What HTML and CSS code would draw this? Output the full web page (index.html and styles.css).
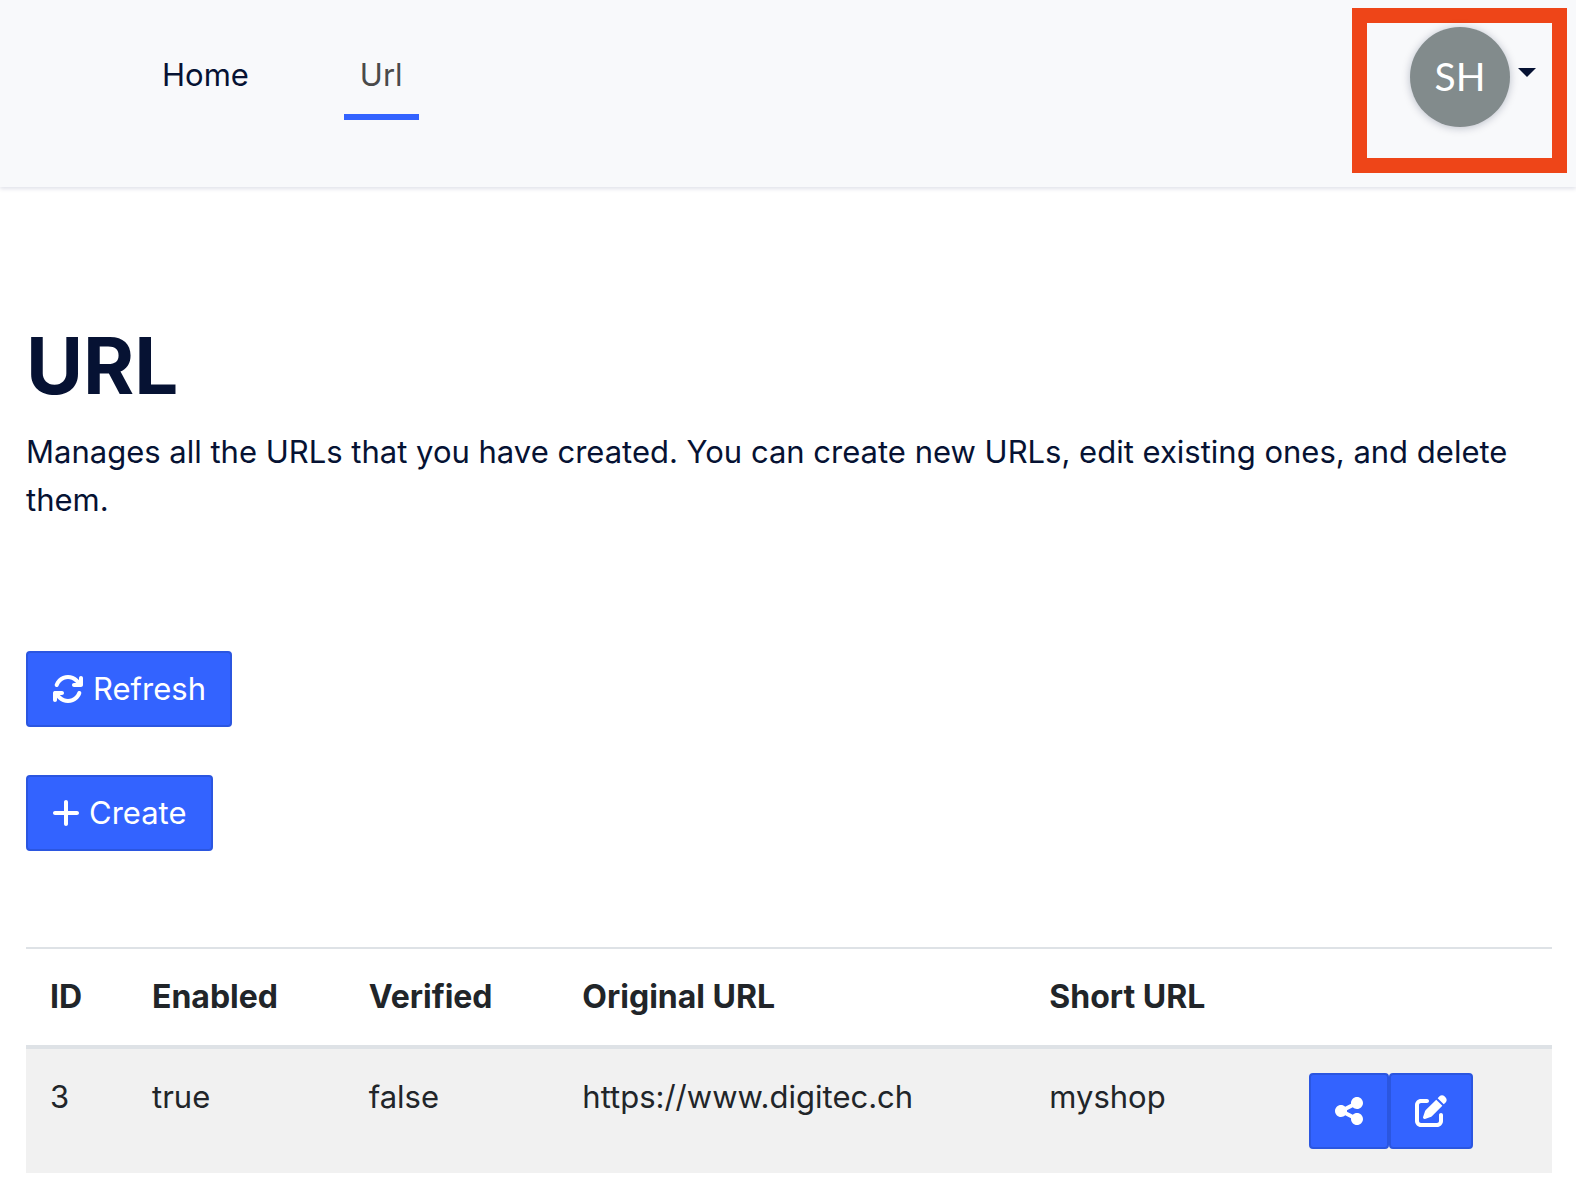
FILE: index.html
```html
<!DOCTYPE html>
<html lang="en">
<head>
<meta charset="utf-8">
<meta name="viewport" content="width=device-width, initial-scale=1">
<title>URL</title>
<link rel="stylesheet" href="styles.css">
</head>
<body>
<header class="topbar">
  <nav class="nav">
    <a class="nav-link" href="#home">Home</a>
    <a class="nav-link nav-link-active" href="#url" aria-current="page">Url</a>
  </nav>
  <div class="profile">
    <button class="profile-toggle" type="button" aria-haspopup="true">
      <span class="avatar">SH</span>
      <svg class="caret" viewBox="0 0 18 9" aria-hidden="true"><path d="M0 0h18L9 9z"/></svg>
    </button>
  </div>
</header>
<main class="content">
  <h1 class="title">URL</h1>
  <p class="lead">Manages all the URLs that you have created. You can create new URLs, edit existing ones, and delete them.</p>
  <div class="actions">
    <button class="btn" type="button">
      <svg class="icon" viewBox="0 0 512 512" aria-hidden="true"><path d="M105.1 202.6c7.7-21.8 20.2-42.3 37.8-59.8c62.5-62.5 163.8-62.5 226.3 0L386.3 160H352c-17.7 0-32 14.3-32 32s14.3 32 32 32H463.5c0 0 0 0 0 0h.4c17.7 0 32-14.3 32-32V80c0-17.7-14.3-32-32-32s-32 14.3-32 32v35.2L414.4 97.6c-87.5-87.5-229.3-87.5-316.8 0C73.2 122 55.6 150.7 44.8 181.4c-5.9 16.7 2.9 34.9 19.5 40.8s34.9-2.9 40.8-19.5zM39 289.3c-5 1.5-9.8 4.2-13.7 8.2c-4 4-6.7 8.8-8.1 14c-.3 1.2-.6 2.5-.8 3.8c-.3 1.7-.4 3.4-.4 5.1V432c0 17.7 14.3 32 32 32s32-14.3 32-32V396.9l17.6 17.5 0 0c87.5 87.4 229.3 87.4 316.7 0c24.4-24.4 42.1-53.1 52.9-83.7c5.9-16.7-2.9-34.9-19.5-40.8s-34.9 2.9-40.8 19.5c-7.7 21.8-20.2 42.3-37.8 59.8c-62.5 62.5-163.8 62.5-226.3 0l-.1-.1L125.6 352H160c17.7 0 32-14.3 32-32s-14.3-32-32-32H48.4c-1.6 0-3.2 .1-4.8 .3s-3.1 .5-4.6 1z"/></svg>
      Refresh
    </button>
    <button class="btn" type="button">
      <svg class="icon icon-narrow" viewBox="0 0 448 512" aria-hidden="true"><path d="M256 80c0-17.7-14.3-32-32-32s-32 14.3-32 32V224H48c-17.7 0-32 14.3-32 32s14.3 32 32 32H192V432c0 17.7 14.3 32 32 32s32-14.3 32-32V288H400c17.7 0 32-14.3 32-32s-14.3-32-32-32H256V80z"/></svg>
      Create
    </button>
  </div>
  <table class="table">
    <thead>
      <tr>
        <th class="col-id" scope="col">ID</th>
        <th class="col-enabled" scope="col">Enabled</th>
        <th class="col-verified" scope="col">Verified</th>
        <th class="col-original" scope="col">Original URL</th>
        <th class="col-short" scope="col">Short URL</th>
        <td></td>
      </tr>
    </thead>
    <tbody>
      <tr>
        <td>3</td>
        <td>true</td>
        <td>false</td>
        <td>https://www.digitec.ch</td>
        <td>myshop</td>
        <td>
          <div class="btn-group">
            <button class="btn" type="button" aria-label="Share">
              <svg class="icon icon-narrow" viewBox="0 0 448 512" aria-hidden="true"><path d="M352 224c53 0 96-43 96-96s-43-96-96-96s-96 43-96 96c0 4 .2 8 .7 11.9l-94.1 47C145.4 170.2 121.9 160 96 160c-53 0-96 43-96 96s43 96 96 96c25.9 0 49.4-10.2 66.6-26.9l94.1 47c-.5 3.9-.7 7.8-.7 11.9c0 53 43 96 96 96s96-43 96-96s-43-96-96-96c-25.9 0-49.4 10.2-66.6 26.9l-94.1-47c.5-3.9 .7-7.8 .7-11.9s-.2-8-.7-11.9l94.1-47C302.6 213.8 326.1 224 352 224z"/></svg>
            </button>
            <button class="btn" type="button" aria-label="Edit">
              <svg class="icon" viewBox="0 0 512 512" aria-hidden="true"><path d="M471.6 21.7c-21.9-21.9-57.3-21.9-79.2 0L362.3 51.7l97.9 97.9 30.1-30.1c21.9-21.9 21.9-57.3 0-79.2L471.6 21.7zm-299.2 220c-6.1 6.1-10.8 13.6-13.5 21.9l-29.6 88.8c-2.9 8.6-.6 18.1 5.8 24.6s15.9 8.7 24.6 5.8l88.8-29.6c8.2-2.7 15.7-7.4 21.9-13.5L437.7 172.3 339.7 74.3 172.4 241.7zM96 64C43 64 0 107 0 160V416c0 53 43 96 96 96H352c53 0 96-43 96-96V320c0-17.7-14.3-32-32-32s-32 14.3-32 32v96c0 17.7-14.3 32-32 32H96c-17.7 0-32-14.3-32-32V160c0-17.7 14.3-32 32-32h96c17.7 0 32-14.3 32-32s-14.3-32-32-32H96z"/></svg>
            </button>
          </div>
        </td>
      </tr>
    </tbody>
  </table>
</main>
</body>
</html>
```
FILE: styles.css
```css
* {
  box-sizing: border-box;
}

body {
  margin: 0;
  background: #fff;
  color: #061233;
  font-family: Inter, "Liberation Sans", sans-serif;
  font-size: 31px;
  line-height: 48px;
}

.topbar {
  display: flex;
  justify-content: space-between;
  align-items: flex-start;
  padding: 8px 9px 14px 146px;
  background: #f8f9fb;
  box-shadow: 0 2px 4px rgba(6, 18, 80, 0.12);
}

.nav {
  display: flex;
  gap: 79px;
  padding-top: 43px;
}

.nav-link {
  padding: 0 16px 15px;
  border-bottom: 6px solid transparent;
  color: #061233;
  text-decoration: none;
}

.nav-link-active {
  border-bottom-color: #3363ff;
  color: #4a4a4a;
}

.profile {
  padding: 4px 16px 31px 43px;
  border: 15px solid #ee4518;
}

.profile-toggle {
  display: flex;
  align-items: center;
  gap: 8px;
  padding: 0;
  border: 0;
  background: none;
  color: #061233;
}

.avatar {
  width: 100px;
  height: 100px;
  border-radius: 50%;
  background: #828b8c;
  box-shadow: 0 1px 8px rgba(6, 18, 51, 0.25);
  color: #fff;
  font-family: Lato, sans-serif;
  font-size: 39px;
  line-height: 98px;
}

.caret {
  width: 18px;
  height: 9px;
  margin-bottom: 9px;
  fill: currentColor;
}

.content {
  padding: 129px 24px 16px 26px;
}

.title {
  margin: 0;
  font-size: 78px;
  font-weight: 700;
  line-height: 100px;
}

.lead {
  margin: 12px 0 127px;
}

.actions {
  display: flex;
  flex-direction: column;
  align-items: flex-start;
  gap: 48px;
  margin-bottom: 96px;
}

.btn {
  display: flex;
  align-items: center;
  gap: 9px;
  height: 76px;
  padding: 0 24px;
  border: 2px solid #2b56e0;
  border-radius: 4px;
  background: #3363ff;
  color: #fff;
  font: inherit;
}

.btn-group {
  display: flex;
}

.icon {
  width: 32px;
  height: 32px;
  fill: currentColor;
}

.icon-narrow {
  width: 28px;
}

.table {
  width: 100%;
  table-layout: fixed;
  border-spacing: 0;
  color: #212529;
}

.table th,
.table td {
  padding: 24px;
  text-align: left;
  vertical-align: top;
}

.table th {
  font-size: 32px;
  font-weight: 700;
}

.table thead th,
.table thead td {
  border-top: 2px solid #dee2e6;
  border-bottom: 4px solid #dee2e6;
}

.table tbody tr {
  background: #f1f1f1;
}

.col-id {
  width: 102px;
}

.col-enabled {
  width: 14.2%;
}

.col-verified {
  width: 14%;
}

.col-original {
  width: 30.6%;
}

.col-short {
  width: 17%;
}
```
